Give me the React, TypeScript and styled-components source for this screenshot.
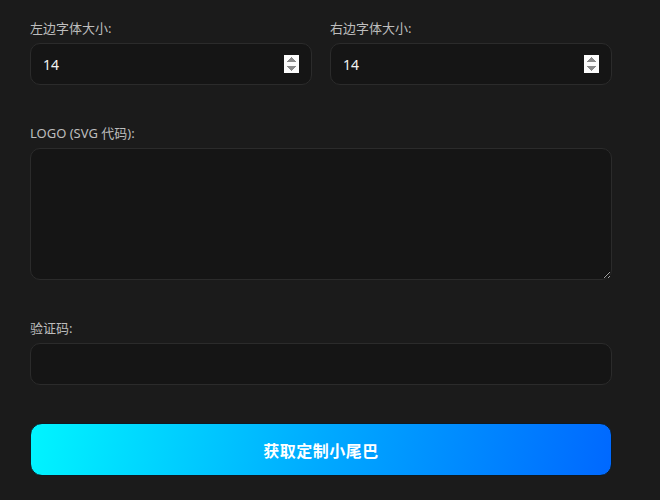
import React from "react";
import styled, { createGlobalStyle } from "styled-components";

const Global = createGlobalStyle`
  html, body { margin: 0; padding: 0; background: #1b1b1b; }
  body { font-family: "Noto Sans", "Noto Sans CJK SC", sans-serif; }
`;

const Page = styled.div`
  width: 660px;
  height: 500px;
  box-sizing: border-box;
  padding: 18px 48px 0 30px;
  background: #1b1b1b;
  display: flex;
  flex-direction: column;
  gap: 38px;
  overflow: hidden;
`;

const Row = styled.div`
  display: grid;
  grid-template-columns: 1fr 1fr;
  gap: 18px;
`;

const Field = styled.div`
  display: flex;
  flex-direction: column;
  gap: 5px;
`;

const Label = styled.label`
  font-size: 13px;
  line-height: 20px;
  color: #bdbdbd;
  font-family: "Noto Sans", "Noto Sans CJK SC", sans-serif;
`;

const Input = styled.input`
  box-sizing: border-box;
  height: 42px;
  width: 100%;
  background: #151515;
  border: 1px solid #2b2b2b;
  border-radius: 10px;
  padding: 0 12px;
  color: #f2f2f2;
  font-size: 14px;
  font-family: "Noto Sans", "Noto Sans CJK SC", sans-serif;
  outline: none;

  &::-webkit-inner-spin-button,
  &::-webkit-outer-spin-button {
    opacity: 1;
  }
`;

const TextArea = styled.textarea`
  box-sizing: border-box;
  height: 132px;
  width: 100%;
  background: #151515;
  border: 1px solid #2b2b2b;
  border-radius: 10px;
  padding: 10px 12px;
  color: #f2f2f2;
  font-size: 14px;
  font-family: "Noto Sans", "Noto Sans CJK SC", sans-serif;
  outline: none;
  resize: vertical;
  display: block;
`;

const Button = styled.button`
  box-sizing: border-box;
  height: 53px;
  width: 100%;
  border: 1px solid #0e1a22;
  border-radius: 12px;
  background: linear-gradient(100deg, #00f5ff 0%, #00aaff 50%, #0068ff 100%);
  color: #ffffff;
  font-size: 16px;
  font-weight: 700;
  font-family: "Noto Sans CJK SC", "Noto Sans", sans-serif;
  letter-spacing: 0.5px;
  cursor: pointer;
`;

export default function App() {
  return (
    <>
      <Global />
      <Page>
        <Row>
          <Field>
            <Label>左边字体大小:</Label>
            <Input type="number" defaultValue={14} />
          </Field>
          <Field>
            <Label>右边字体大小:</Label>
            <Input type="number" defaultValue={14} />
          </Field>
        </Row>
        <Field>
          <Label>LOGO (SVG 代码):</Label>
          <TextArea />
        </Field>
        <Field>
          <Label>验证码:</Label>
          <Input type="text" />
        </Field>
        <Button>获取定制小尾巴</Button>
      </Page>
    </>
  );
}
